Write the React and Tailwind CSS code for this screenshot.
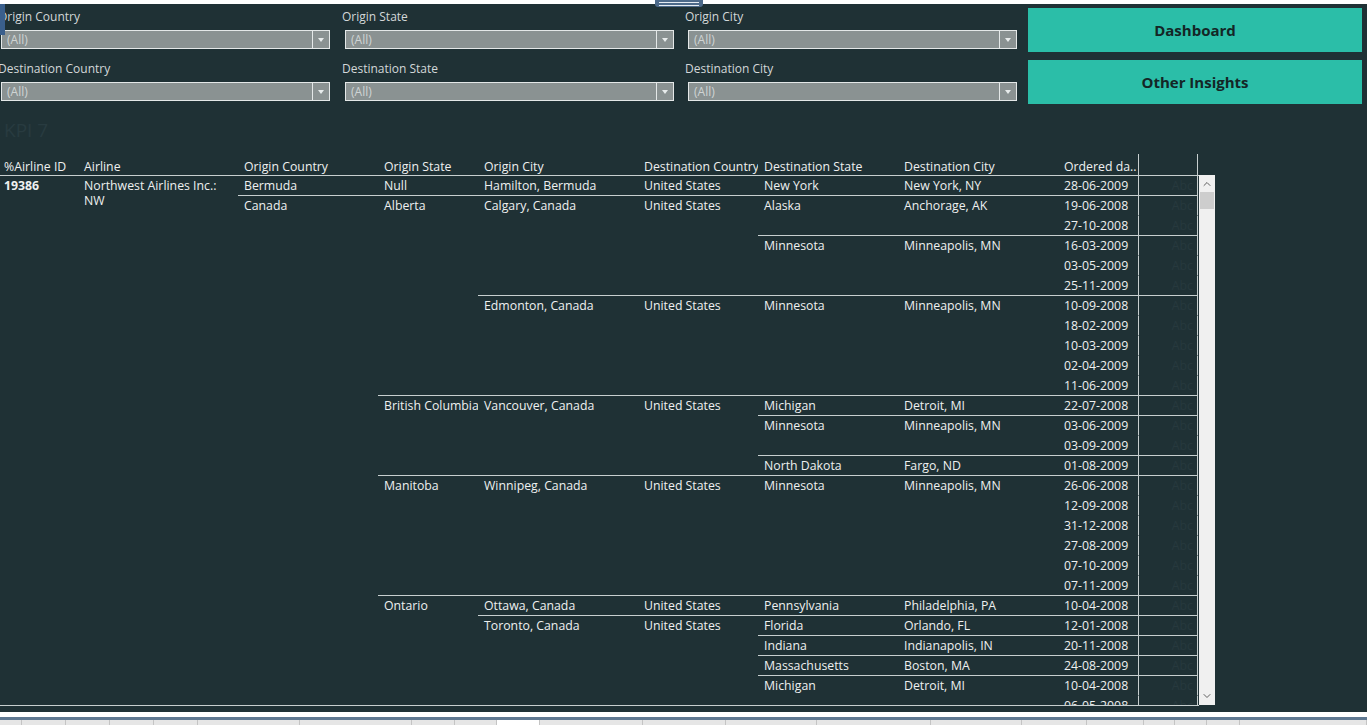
import { ChevronUp, ChevronDown } from "lucide-react";

const FONT = { fontFamily: '"Open Sans", "Noto Sans", sans-serif' };

const COLS = [
  "w-[78px]",
  "w-[160px]",
  "w-[140px]",
  "w-[100px]",
  "w-[160px]",
  "w-[120px]",
  "w-[140px]",
  "w-[160px]",
  "w-[80px]",
];

const HEADERS = [
  "%Airline ID",
  "Airline",
  "Origin Country",
  "Origin State",
  "Origin City",
  "Destination Country",
  "Destination State",
  "Destination City",
  "Ordered da..",
];

const US = "United States";
const d = (date) => ["", "", "", "", "", "", "", "", date];

const ROWS = [
  { b: null, c: ["19386", "Northwest Airlines Inc.:", "Bermuda", "Null", "Hamilton, Bermuda", US, "New York", "New York, NY", "28-06-2009"] },
  { b: 2, c: ["", "", "Canada", "Alberta", "Calgary, Canada", US, "Alaska", "Anchorage, AK", "19-06-2008"] },
  { b: null, c: d("27-10-2008") },
  { b: 6, c: ["", "", "", "", "", "", "Minnesota", "Minneapolis, MN", "16-03-2009"] },
  { b: null, c: d("03-05-2009") },
  { b: null, c: d("25-11-2009") },
  { b: 4, c: ["", "", "", "", "Edmonton, Canada", US, "Minnesota", "Minneapolis, MN", "10-09-2008"] },
  { b: null, c: d("18-02-2009") },
  { b: null, c: d("10-03-2009") },
  { b: null, c: d("02-04-2009") },
  { b: null, c: d("11-06-2009") },
  { b: 3, c: ["", "", "", "British Columbia", "Vancouver, Canada", US, "Michigan", "Detroit, MI", "22-07-2008"] },
  { b: 6, c: ["", "", "", "", "", "", "Minnesota", "Minneapolis, MN", "03-06-2009"] },
  { b: null, c: d("03-09-2009") },
  { b: 6, c: ["", "", "", "", "", "", "North Dakota", "Fargo, ND", "01-08-2009"] },
  { b: 3, c: ["", "", "", "Manitoba", "Winnipeg, Canada", US, "Minnesota", "Minneapolis, MN", "26-06-2008"] },
  { b: null, c: d("12-09-2008") },
  { b: null, c: d("31-12-2008") },
  { b: null, c: d("27-08-2009") },
  { b: null, c: d("07-10-2009") },
  { b: null, c: d("07-11-2009") },
  { b: 3, c: ["", "", "", "Ontario", "Ottawa, Canada", US, "Pennsylvania", "Philadelphia, PA", "10-04-2008"] },
  { b: 4, c: ["", "", "", "", "Toronto, Canada", US, "Florida", "Orlando, FL", "12-01-2008"] },
  { b: 6, c: ["", "", "", "", "", "", "Indiana", "Indianapolis, IN", "20-11-2008"] },
  { b: 6, c: ["", "", "", "", "", "", "Massachusetts", "Boston, MA", "24-08-2009"] },
  { b: 6, c: ["", "", "", "", "", "", "Michigan", "Detroit, MI", "10-04-2008"] },
  { b: null, c: d("06-05-2008") },
];

const TABS = [22, 44, 44, 44, 44, 102, 112, 43, 42, 43, 103, 83, 91, 114, 91, 65, 57, 31, 32, 33, 127];

function Filter({ label, w }) {
  return (
    <div className={w}>
      <div className="h-[18px] leading-[18px] text-[12px] text-[#d3d8d9]">{label}</div>
      <div className="mt-[4px] ml-[3px] w-[329px] h-[19px] flex border border-[#e4e8e8] bg-[#8a9292]">
        <div className="flex-1 pl-[5px] text-[12px] leading-[17px] text-[#cfd4d4]">(All)</div>
        <div className="w-[17px] border-l border-[#e4e8e8] flex items-center justify-center">
          <div className="w-0 h-0 border-l-[3px] border-r-[3px] border-t-[4px] border-l-transparent border-r-transparent border-t-[#e8ecec]" />
        </div>
      </div>
    </div>
  );
}

function Row({ row, idx }) {
  return (
    <div className="flex h-[20px]">
      {row.c.map((txt, i) => {
        const line = row.b !== null && i >= row.b;
        const first = idx === 0 && i === 0;
        // airline name wraps onto a second line in the first row
        const wrap = idx === 0 && i === 1;
        return (
          <div
            key={i}
            className={`${COLS[i]} h-[20px] ${first ? "pl-[4px] font-bold" : "pl-[6px]"} whitespace-nowrap ${wrap ? "overflow-visible" : "overflow-hidden"} leading-[20px] ${line ? "border-t border-[#c7cfcf]" : "border-t border-transparent"}`}
          >
            {wrap ? (
              <>
                <div className="leading-[20px]">{txt}</div>
                <div className="leading-[10px]">NW</div>
              </>
            ) : (
              txt
            )}
          </div>
        );
      })}
      <div
        className={`w-[60px] h-[20px] border-l border-r border-[#c7cfcf] text-right pr-[4px] leading-[20px] overflow-hidden text-[#27393e] ${row.b !== null ? "border-t border-t-[#c7cfcf]" : "border-t border-t-transparent"}`}
      >
        Abc
      </div>
    </div>
  );
}

export default function App() {
  return (
    <div style={FONT} className="w-[1367px] h-[725px] overflow-hidden bg-[#1f3135] flex flex-col relative">
      <div className="h-[4px] bg-white shrink-0" />
      {/* top drag handle */}
      <div className="absolute left-[655px] top-0 w-[48px] h-[7px] rounded-b-[3px] bg-[#4d6a8a] flex flex-col items-center justify-center gap-[2px]">
        <div className="w-[40px] h-px bg-[#e6ecf2]" />
        <div className="w-[40px] h-px bg-[#e6ecf2]" />
      </div>
      <div className="absolute left-0 top-[4px] w-[5px] h-[31px] bg-[#3a5f8c]" />

      {/* filters + nav buttons */}
      <div className="flex shrink-0">
        <div className="ml-[-2px] w-[1030px] pt-[4px] flex flex-col gap-[11px]">
          <div className="flex">
            <Filter w="w-[344px]" label="Origin Country" />
            <Filter w="w-[343px]" label="Origin State" />
            <Filter w="w-[343px]" label="Origin City" />
          </div>
          <div className="flex">
            <Filter w="w-[344px]" label="Destination Country" />
            <Filter w="w-[343px]" label="Destination State" />
            <Filter w="w-[343px]" label="Destination City" />
          </div>
        </div>
        <div className="w-[334px] pt-[4px] flex flex-col gap-[8px]">
          <button className="h-[44px] bg-[#2bbea8] text-[15px] font-bold text-[#142626]">Dashboard</button>
          <button className="h-[44px] bg-[#2bbea8] text-[15px] font-bold text-[#142626]">Other Insights</button>
        </div>
      </div>

      <div className="h-[50px] shrink-0 pl-[4px] pt-[14px] text-[19px] leading-[24px] text-[#283b40]">KPI 7</div>

      {/* table */}
      <div className="flex shrink-0 text-[12.3px] text-[#eef0f0]">
        <div className="w-[1199px]">
          <div className="flex h-[22px] border-b border-[#c7cfcf]">
            {HEADERS.map((h, i) => (
              <div
                key={h}
                className={`${COLS[i]} ${i === 0 ? "pl-[4px]" : "pl-[6px]"} leading-[21px] pt-[2px] whitespace-nowrap overflow-hidden`}
              >
                {h}
              </div>
            ))}
            <div className="w-[60px] border-l border-r border-[#c7cfcf]" />
          </div>
          <div className="-mt-px h-[531px] overflow-hidden border-b border-[#c7cfcf]">
            {ROWS.map((r, i) => (
              <Row key={i} row={r} idx={i} />
            ))}
          </div>
        </div>
        <div className="w-[16px] mt-[21px] h-[530px] bg-[#f0f0f0] flex flex-col items-center">
          <ChevronUp className="w-[12px] h-[12px] mt-[3px] text-[#606060]" strokeWidth={2} />
          <div className="w-[14px] h-[17px] mt-[2px] bg-[#cdcdcd]" />
          <div className="flex-1" />
          <ChevronDown className="w-[12px] h-[12px] mb-[3px] text-[#606060]" strokeWidth={2} />
        </div>
      </div>

      <div className="flex-1" />
      <div className="h-[5px] bg-white shrink-0" />
      <div className="h-[3px] bg-[#5e7891] shrink-0" />
      <div className="h-[5px] bg-[#e6e6e6] flex shrink-0">
        {TABS.map((w, i) => (
          <div
            key={i}
            style={{ width: w }}
            className={`h-full border-r border-[#c4c4c4] ${i === 9 ? "bg-white" : ""}`}
          />
        ))}
      </div>
    </div>
  );
}
